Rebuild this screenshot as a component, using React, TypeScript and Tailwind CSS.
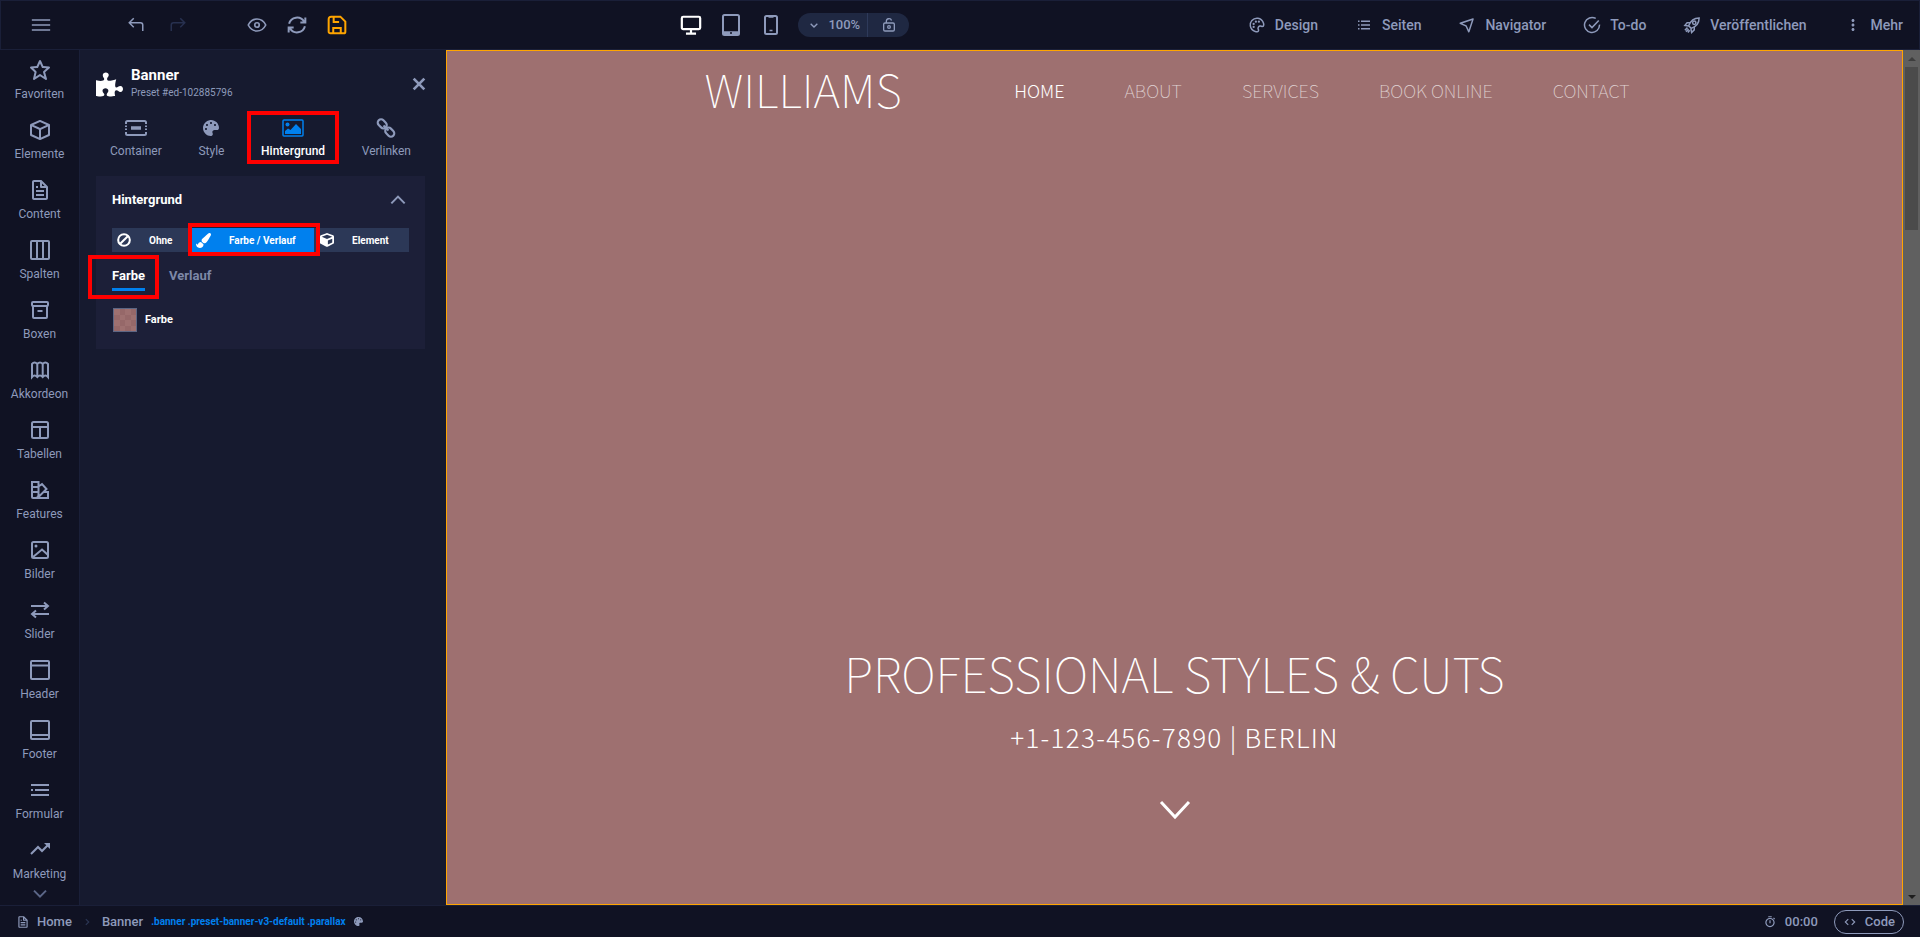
import React from 'react';
import { BiStar, BiCube, BiFile, BiPalette, BiListUl, BiNavigation, BiDotsVerticalRounded, BiStopwatch, BiTrendingUp, BiChevronDown, BiChevronRight, BiCode } from 'react-icons/bi';
import { FaPuzzlePiece, FaPalette, FaPaintBrush, FaCube } from 'react-icons/fa';

interface IconProps {
  className?: string;
}

interface StrokeProps extends IconProps {
  width?: number;
  children: React.ReactNode;
}

const Stroke: React.FC<StrokeProps> = ({ className = '', width = 2, children }) => (
  <svg viewBox="0 0 24 24" fill="none" stroke="currentColor" strokeWidth={width} className={className} aria-hidden="true">
    {children}
  </svg>
);

const ColumnsIcon = (p: IconProps) => <Stroke {...p}><rect x="3" y="3" width="18" height="18" rx="1" /><path d="M9 3v18M15 3v18" /></Stroke>;
const BoxIcon = (p: IconProps) => <Stroke {...p}><rect x="4" y="4" width="16" height="4" rx="1" /><path d="M5 8v11a1 1 0 0 0 1 1h12a1 1 0 0 0 1-1V8M9.500 13h5" /></Stroke>;
const AccordionIcon = (p: IconProps) => <Stroke {...p}><path d="M4 19V6q2.500-3 5.300 0 2.700-3 5.400 0 2.700-3 5.300 0v13q-2.600-3-5.300 0-2.700-3-5.400 0-2.800-3-5.300 0zM9.300 6v13M14.700 6v13" /></Stroke>;
const TableIcon = (p: IconProps) => <Stroke {...p}><rect x="4" y="4" width="16" height="16" rx="1.500" /><path d="M4 9h16M12 9v11" /></Stroke>;
const SwatchIcon = (p: IconProps) => <Stroke {...p}><path d="M4 4h6.500v13a3 3 0 0 1-3 3H5a1 1 0 0 1-1-1zM4 9h6M4 14h6M10.500 8.500L14 6l4.500 5L10 19.500M15 14h5v6H8" /></Stroke>;
const PictureIcon = (p: IconProps) => <Stroke {...p}><rect x="4" y="4" width="16" height="16" rx="1.500" /><path d="M5 19l9-7.500L20 17" /><circle cx="8" cy="8" r="1.500" fill="currentColor" stroke="none" /></Stroke>;
const SliderIcon = (p: IconProps) => <Stroke {...p}><path d="M3 8h17M16 4.500L20 8l-4 3.500M21 16H4M8 12.500L4 16l4 3.500" /></Stroke>;
const HeaderIcon = (p: IconProps) => <Stroke {...p}><rect x="3" y="3" width="18" height="18" rx="1" /><path d="M3 7.500h18" /></Stroke>;
const FooterIcon = (p: IconProps) => <Stroke {...p}><rect x="3" y="3" width="18" height="18" rx="1" /><path d="M3 17h18" /></Stroke>;
const FormIcon = (p: IconProps) => <Stroke {...p}><path d="M3 7h18M7 12h14M3 12h2M3 17h18" /></Stroke>;
const MenuIcon = (p: IconProps) => <Stroke {...p}><path d="M1 6h22M1 12h22M1 18h22" /></Stroke>;
const UndoIcon = (p: IconProps) => <Stroke {...p}><path d="M9 3L3 9l6 6M3 9h15a3 3 0 0 1 3 3v8" /></Stroke>;
const RedoIcon = (p: IconProps) => <Stroke {...p}><path d="M15 3l6 6-6 6M21 9H6a3 3 0 0 0-3 3v8" /></Stroke>;
const EyeIcon = (p: IconProps) => <Stroke {...p}><path d="M1.500 12C4 7 7.500 4.800 12 4.800S20 7 22.500 12C20 17 16.500 19.200 12 19.200S4 17 1.500 12z" /><circle cx="12" cy="12" r="2.700" /></Stroke>;
const RefreshIcon = (p: IconProps) => <Stroke width={2.4} {...p}><path d="M2.500 10.500A9.800 9.800 0 0 1 20.500 8M21.500 13.500A9.800 9.800 0 0 1 3.500 16M22 3v6h-6M2 21v-6h6" /></Stroke>;
const SaveIcon = (p: IconProps) => <Stroke width={2.4} {...p}><path d="M5 2h11l6 6v12a2 2 0 0 1-2 2H4a2 2 0 0 1-2-2V5a3 3 0 0 1 3-3zM8 3v5.500h6.500M7.500 22v-6.500h9V22" /></Stroke>;
const LockIcon = (p: IconProps) => <Stroke {...p}><rect x="4" y="9" width="16" height="12" rx="2" /><path d="M8 9V6.500a4 4 0 0 1 7.800-1.200" /><circle cx="12" cy="15" r="2" /></Stroke>;
const MonitorIcon = (p: IconProps) => <Stroke width={2.4} {...p}><rect x="2" y="3" width="20" height="13.500" rx="1.500" /><path d="M12 17v4M6.500 21.500h11" /></Stroke>;
const TodoIcon = (p: IconProps) => <Stroke {...p}><path d="M17 3.300A10 10 0 1 0 22 11.500M8 11.500l4 4 9-9.500" /></Stroke>;
const BanIcon = (p: IconProps) => <Stroke width={3.5} {...p}><circle cx="12" cy="12" r="10" /><path d="M5.500 18.500l13-13" /></Stroke>;

const RocketIcon = (p: IconProps) => (
  <Stroke {...p}>
    <path d="M7.500 13C10 6.500 14.500 2.500 21.500 2.500 21.500 9.500 17.500 14 11 16.500z" />
    <circle cx="15" cy="9" r="2.200" />
    <path d="M9.500 9H5.500L2.500 12.500l5 .8M15 14.500v4L11.500 22l-1-5.200M6 15.500L2.500 19M7.500 17.500L4 21M9 19l-2.500 3" />
  </Stroke>
);

const ChainIcon = (p: IconProps) => (
  <Stroke width={2.6} {...p}>
    <rect x="1.500" y="3" width="12" height="8" rx="4" transform="rotate(45 7.500 7)" />
    <rect x="10.500" y="13" width="12" height="8" rx="4" transform="rotate(45 16.500 17)" />
    <path d="M9 9l6 6" />
  </Stroke>
);

const BackgroundIcon = ({ className = '' }: IconProps) => (
  <svg viewBox="0 0 22 18" fill="currentColor" className={className} aria-hidden="true">
    <rect x="1" y="1" width="20" height="16" rx="1" fill="none" stroke="currentColor" strokeWidth="1.500" />
    <circle cx="5.500" cy="5.500" r="2" />
    <path d="M3 15v-3l3-2.500L8.500 11 14 5l5 5v5z" />
  </svg>
);

const ContainerIcon = ({ className = '' }: IconProps) => (
  <svg viewBox="0 0 22 16" fill="none" stroke="currentColor" strokeWidth="2" className={className} aria-hidden="true">
    <path d="M1 4V2.500A1.500 1.500 0 0 1 2.500 1h17A1.500 1.500 0 0 1 21 2.500V4M1 12v1.500A1.500 1.500 0 0 0 2.500 15h17a1.500 1.500 0 0 0 1.500-1.500V12" />
    <path d="M1 5.500v5.500M21 5.500v5.500" strokeDasharray="1.500 1.500" />
    <path d="M6 8h10" strokeWidth="3.500" />
  </svg>
);

const TabletIcon = ({ className = '' }: IconProps) => (
  <svg viewBox="0 0 18 22" fill="none" stroke="currentColor" className={className} aria-hidden="true">
    <rect x="1" y="1" width="16" height="20" rx="1.500" strokeWidth="2" />
    <path d="M1 19h16" strokeWidth="3.500" />
    <circle cx="9" cy="19" r="1" fill="#101223" stroke="none" />
  </svg>
);

const PhoneIcon = ({ className = '' }: IconProps) => (
  <svg viewBox="0 0 14 20" fill="none" stroke="currentColor" className={className} aria-hidden="true">
    <rect x="1" y="1" width="12" height="18" rx="1.500" strokeWidth="2" />
    <path d="M4.500 2h5M5.500 15.500h3" strokeWidth="1.500" />
  </svg>
);

const elements = [
  { label: 'Favoriten', icon: BiStar },
  { label: 'Elemente', icon: BiCube },
  { label: 'Content', icon: BiFile },
  { label: 'Spalten', icon: ColumnsIcon },
  { label: 'Boxen', icon: BoxIcon },
  { label: 'Akkordeon', icon: AccordionIcon },
  { label: 'Tabellen', icon: TableIcon },
  { label: 'Features', icon: SwatchIcon },
  { label: 'Bilder', icon: PictureIcon },
  { label: 'Slider', icon: SliderIcon },
  { label: 'Header', icon: HeaderIcon },
  { label: 'Footer', icon: FooterIcon },
  { label: 'Formular', icon: FormIcon },
  { label: 'Marketing', icon: BiTrendingUp },
];

const actions = [
  { label: 'Design', icon: BiPalette },
  { label: 'Seiten', icon: BiListUl },
  { label: 'Navigator', icon: BiNavigation },
  { label: 'To-do', icon: TodoIcon },
  { label: 'Veröffentlichen', icon: RocketIcon },
  { label: 'Mehr', icon: BiDotsVerticalRounded },
];

const pages = ['HOME', 'ABOUT', 'SERVICES', 'BOOK ONLINE', 'CONTACT'];

const Marker = ({ className = '' }: IconProps) => (
  <span className={`absolute z-10 border-4 border-[#ff0000] pointer-events-none ${className}`} />
);

const TopBar = () => (
  <header className="h-[50px] shrink-0 flex items-center justify-between border border-[#1a1f38] bg-[#101223] pl-[30px] pr-4">
    <div className="flex items-center">
      <button aria-label="Menü"><MenuIcon className="w-5 h-5" /></button>
      <button aria-label="Rückgängig" className="ml-19"><UndoIcon className="w-[18px] h-[18px]" /></button>
      <button aria-label="Wiederholen" className="ml-6 text-[#27304f]"><RedoIcon className="w-[18px] h-[18px]" /></button>
      <button aria-label="Vorschau" className="ml-15"><EyeIcon className="w-5 h-5" /></button>
      <button aria-label="Neu laden" className="ml-5"><RefreshIcon className="w-5 h-5" /></button>
      <button aria-label="Speichern" className="ml-5 text-[#ffa500]"><SaveIcon className="w-5 h-5" /></button>
    </div>

    <div className="mr-1 flex items-center">
      <button aria-label="Desktop" className="text-white"><MonitorIcon className="w-[22px] h-[22px]" /></button>
      <button aria-label="Tablet" className="ml-5"><TabletIcon className="w-[18px] h-[22px]" /></button>
      <button aria-label="Smartphone" className="ml-6"><PhoneIcon className="w-[14px] h-5" /></button>
      <div className="ml-5 h-6 flex items-center rounded-full bg-[#1f2842]">
        <button className="h-6 w-[70px] flex items-center gap-[6px] pl-2 text-[13px] font-medium border-r border-[#2e3a5a]">
          <BiChevronDown className="w-4 h-4" /> 100%
        </button>
        <button aria-label="Sperren" className="w-[41px] flex justify-center"><LockIcon className="w-4 h-4" /></button>
      </div>
    </div>

    <nav className="flex items-center gap-9 text-sm font-medium">
      {actions.map(({ label, icon: Icon }) => (
        <button key={label} className="flex items-center gap-2">
          <Icon className="w-5 h-5 p-px" /> {label}
        </button>
      ))}
    </nav>
  </header>
);

const ElementBar = () => (
  <aside className="w-20 shrink-0 flex flex-col bg-[#101223] border-r border-[#1a1f38] overflow-hidden">
    {elements.map(({ label, icon: Icon }) => (
      <button key={label} className="h-15 shrink-0 flex flex-col items-center gap-1 pt-2 text-xs">
        <Icon className="w-6 h-6" />
        {label}
      </button>
    ))}
    <Stroke width={3} className="w-4 h-4 -mt-1 mx-auto shrink-0 text-[#5b6687]"><path d="M3 7l9 9 9-9" /></Stroke>
  </aside>
);

const SettingsPanel = () => (
  <section className="w-[366px] shrink-0 bg-[#161a2f] pl-4 pr-[21px] pt-4">
    <div className="flex items-center">
      <FaPuzzlePiece className="w-[27px] h-[27px] text-white" />
      <div className="ml-2 flex-1">
        <h2 className="text-[15px] leading-[18px] font-bold text-white">Banner</h2>
        <p className="text-[10px] leading-[18px]">Preset #ed-102885796</p>
      </div>
      <button aria-label="Schließen" className="-mr-[2px]">
        <Stroke width={4} className="w-4 h-4"><path d="M4 4l16 16M20 4L4 20" /></Stroke>
      </button>
    </div>

    <div className="mt-4 flex justify-between px-[14px] text-xs">
      <button className="flex flex-col items-center gap-[5px]">
        <span className="h-5 flex items-center"><ContainerIcon className="w-[22px] h-4" /></span>
        Container
      </button>
      <button className="flex flex-col items-center gap-[5px]">
        <span className="h-5 flex items-center"><FaPalette className="w-4 h-4" /></span>
        Style
      </button>
      <button className="relative flex flex-col items-center gap-[5px] font-medium text-white">
        <span className="h-5 flex items-center"><BackgroundIcon className="w-[22px] h-[18px] text-[#0080ee]" /></span>
        Hintergrund
        <Marker className="-inset-x-[14px] -top-[7px] -bottom-[5px]" />
      </button>
      <button className="flex flex-col items-center gap-[5px]">
        <span className="h-5 flex items-center"><ChainIcon className="w-5 h-5" /></span>
        Verlinken
      </button>
    </div>

    <div className="mt-[17px] bg-[#1c1f38] px-4 pt-[14px] pb-[17px] text-white">
      <button className="w-full flex items-center justify-between pr-[3px] text-[13px] leading-5 font-bold">
        Hintergrund
        <Stroke width={3} className="w-4 h-4 text-[#8e9abb]"><path d="M2 17L12 7l10 10" /></Stroke>
      </button>

      <div className="mt-[18px] flex h-6 text-[10px] font-bold bg-[#2c3857]">
        <button className="w-20 flex items-center gap-[18px] pl-[5px]">
          <BanIcon className="w-[14px] h-[14px]" /> Ohne
        </button>
        <button className="relative w-[122px] flex items-center gap-[18px] pl-1 bg-[#0080ee]">
          <FaPaintBrush className="w-[15px] h-[15px]" /> Farbe / Verlauf
          <Marker className="-left-1 -right-[6px] -top-[5px] -bottom-1" />
        </button>
        <button className="flex-1 flex items-center gap-[18px] pl-[6px]">
          <FaCube className="w-[14px] h-[14px]" /> Element
        </button>
      </div>

      <div className="mt-[14px] flex gap-6 text-[13px] leading-5 font-bold">
        <button className="relative pb-[2px] border-b-3 border-[#0080ee]">
          Farbe
          <Marker className="-left-6 -right-[14px] -inset-y-[11px]" />
        </button>
        <button className="pb-[2px] border-b-3 border-transparent text-[#7d88a8]">Verlauf</button>
      </div>

      <button className="mt-[17px] ml-px flex items-center gap-2 text-[11px] font-bold">
        <span className="w-6 h-6 grid grid-cols-4 border border-[#5d6684] bg-[#9e7070]">
          {Array.from({ length: 16 }, (_, i) => (
            <span key={i} className={(i + Math.floor(i / 4)) % 2 ? 'bg-[#966869]' : 'bg-[#9e7070]'} />
          ))}
        </span>
        Farbe
      </button>
    </div>
  </section>
);

const Preview = () => (
  <main className="flex-1 min-w-0 flex flex-col border border-[#ffa500] bg-[#9e7070] text-white font-['Noto_Sans_CJK_SC','Noto_Sans',sans-serif] font-thin">
    <div className="w-full max-w-[940px] mx-auto h-[78px] flex items-center justify-between pr-[15px]">
      <h1 className="text-[46px] leading-none pb-1">WILLIAMS</h1>
      <nav className="flex gap-15 text-lg">
        {pages.map((page, i) => (
          <a key={page} href="#" className={i === 0 ? 'font-light' : 'opacity-70'}>{page}</a>
        ))}
      </nav>
    </div>
    <div className="flex-1 flex flex-col items-center justify-end pb-21 text-center">
      <h2 className="text-5xl leading-[72px]">PROFESSIONAL STYLES &amp; CUTS</h2>
      <p className="mt-[9px] text-[26px] leading-10 font-light tracking-wider">+1-123-456-7890 | BERLIN</p>
      <a href="#" aria-label="Weiter" className="mt-[43px]">
        <svg viewBox="0 0 32 20" fill="none" stroke="currentColor" strokeWidth="3" className="w-8 h-5"><path d="M2 2l14 15L30 2" /></svg>
      </a>
    </div>
  </main>
);

const ScrollTrack = () => (
  <div className="w-[17px] shrink-0 flex flex-col items-center bg-[#606060]">
    <span className="h-[17px] flex items-center"><svg viewBox="0 0 8 4" className="w-2 h-1"><path d="M0 4l4-4 4 4z" fill="#3d3d3d" /></svg></span>
    <span className="w-[13px] h-[163px] bg-[#4b4b4b]" />
    <span className="mt-auto h-[17px] flex items-center"><svg viewBox="0 0 8 4" className="w-2 h-1"><path d="M0 0l4 4 4-4z" fill="#1e1e1e" /></svg></span>
  </div>
);

const StatusBar = () => (
  <footer className="h-8 shrink-0 flex items-center border-t border-[#1a1f38] bg-[#101223] pl-4 pr-4 text-[13px] font-medium">
    <BiFile className="w-[14px] h-[14px]" />
    <a href="#" className="ml-[7px]">Home</a>
    <BiChevronRight className="mx-2 w-[14px] h-[14px] text-[#2b3554]" />
    <a href="#">Banner</a>
    <span className="ml-2 text-[10px] font-bold text-[#0080ee]">.banner .preset-banner-v3-default .parallax</span>
    <FaPalette className="ml-2 w-[9px] h-[9px]" />
    <span className="ml-auto flex items-center gap-2"><BiStopwatch className="w-[14px] h-[14px]" /> 00:00</span>
    <button className="ml-4 h-6 flex items-center gap-2 rounded-full border border-[#8e9abb] px-2">
      <BiCode className="w-[14px] h-[14px]" /> Code
    </button>
  </footer>
);

export default function App() {
  return (
    <div className="h-screen flex flex-col overflow-hidden bg-[#101223] text-[#8e9abb] font-['Roboto',sans-serif]">
      <TopBar />
      <div className="flex-1 min-h-0 flex">
        <ElementBar />
        <SettingsPanel />
        <Preview />
        <ScrollTrack />
      </div>
      <StatusBar />
    </div>
  );
}
